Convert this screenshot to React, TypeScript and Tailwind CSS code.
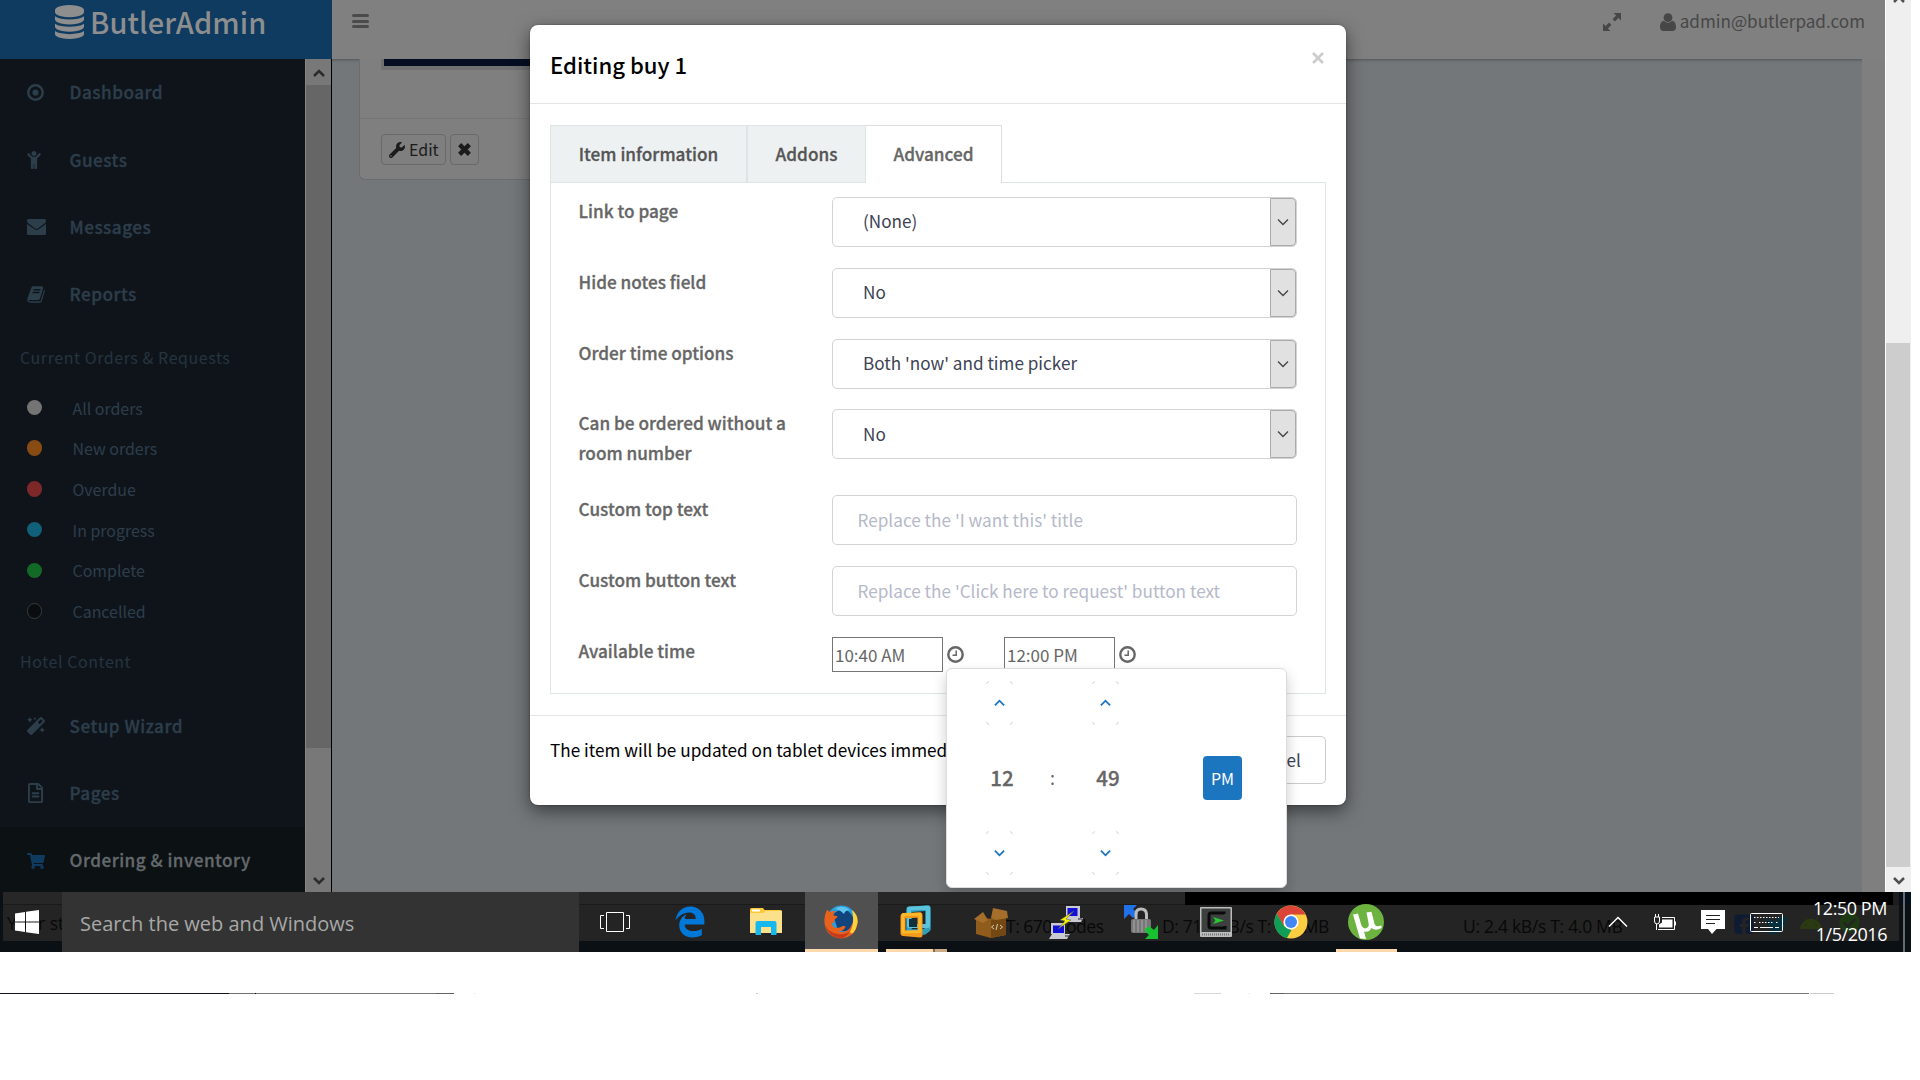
import React from "react";
import {
  FaChild,
  FaMagic,
  FaRegFileAlt,
  FaShoppingCart,
  FaWrench,
  FaEdgeLegacy,
  FaFacebookSquare,
  FaTwitter,
  FaAndroid,
  FaCheckCircle,
} from "react-icons/fa";

/* ---------- small glyphs ---------- */

function DatabaseIcon() {
  return (
    <svg viewBox="0 0 1536 1792" className="h-[34px] w-[29px]" preserveAspectRatio="none" fill="currentColor">
      <path d="M768 768q237 0 443-43t325-127v170q0 69-103 128t-280 93.500-385 34.500-385-34.500-280-93.500-103-128v-170q119 84 325 127t443 43zm0 768q237 0 443-43t325-127v170q0 69-103 128t-280 93.500-385 34.500-385-34.500-280-93.500-103-128v-170q119 84 325 127t443 43zm0-384q237 0 443-43t325-127v170q0 69-103 128t-280 93.500-385 34.500-385-34.500-280-93.500-103-128v-170q119 84 325 127t443 43zm0-1152q208 0 385 34.500t280 93.500 103 128v128q0 69-103 128t-280 93.500-385 34.500-385-34.500-280-93.500-103-128v-128q0-69 103-128t280-93.500 385-34.500z" />
    </svg>
  );
}

function TargetIcon() {
  return (
    <svg viewBox="0 0 17 17" className="size-[17px]">
      <circle cx="8.500" cy="8.500" r="7.200" fill="none" stroke="currentColor" strokeWidth="2.400" />
      <circle cx="8.500" cy="8.500" r="3.100" fill="currentColor" />
    </svg>
  );
}

function EnvelopeIcon() {
  return (
    <svg viewBox="0 0 20 16" className="h-4 w-[19px]" preserveAspectRatio="none" fill="currentColor">
      <path d="M1.500 0h17A1.500 1.500 0 0 1 20 1.500v.4c0 1-.8 2-1.600 2.600L12 9c-.6.400-1.300 1-2 1s-1.400-.6-2-1L1.600 4.500C.8 4 0 2.700 0 1.900v-.4A1.500 1.500 0 0 1 1.500 0z" />
      <path d="M0 4.700c.3.400.7.700 1.100 1l5.700 3.900c1 .7 2 1.500 3.200 1.500s2.200-.8 3.200-1.500l5.700-3.900c.4-.3.800-.6 1.100-1v9.800a1.500 1.500 0 0 1-1.500 1.500h-17A1.500 1.500 0 0 1 0 14.500z" />
    </svg>
  );
}

function BookIcon() {
  return (
    <svg viewBox="0 0 1664 1792" className="h-[19px] w-[18px]" fill="currentColor">
      <path d="M1639 478q40 57 18 129l-275 906q-19 64-76.500 107.500t-122.500 43.500h-923q-77 0-148.500-53.500t-99.500-131.500q-24-67-2-127 0-4 3-27t4-37q1-8-3-21.500t-3-19.500q2-11 8-21t16.500-23.500 16.500-23.500q23-38 45-91.500t30-91.500q3-10 .5-30t-.5-28q3-11 17-28t17-23q21-36 42-92t25-90q1-9-2.500-32t.5-28q4-13 22-30.500t22-22.500q19-26 42.500-84.500t27.500-96.500q1-8-3-25.500t-2-26.500q2-8 9-18t18-23 17-21q8-12 16.500-30.500t15-35 16-36 19.500-32 26.500-23.500 36-11.500 47.500 5.500l-1 3q38-9 51-9h761q74 0 114 56t18 130l-274 906q-36 119-71.500 153.500t-128.500 34.500h-869q-27 0-38 15-11 16-1 43 24 70 144 70h923q29 0 56-15.500t35-41.500l300-987q7-22 5-57 38 15 59 43zm-1064 2q-4 13 2 22.500t20 9.500h608q13 0 25.500-9.500t16.500-22.500l21-64q4-13-2-22.500t-20-9.500h-608q-13 0-25.500 9.500t-16.500 22.500zm-83 256q-4 13 2 22.500t20 9.500h608q13 0 25.500-9.500t16.500-22.500l21-64q4-13-2-22.500t-20-9.500h-608q-13 0-25.500 9.500t-16.500 22.500z" />
    </svg>
  );
}

function ClockIcon() {
  return (
    <svg viewBox="0 0 17 17" className="size-[17px]" fill="none" stroke="#666">
      <circle cx="8.500" cy="8.500" r="7.200" strokeWidth="2.400" />
      <path d="M9.200 4.500V9.200H5.500" strokeWidth="1.500" />
    </svg>
  );
}

function Chevron({ up = false, className = "" }: { up?: boolean; className?: string }) {
  return (
    <svg viewBox="0 0 12 8" className={className} fill="none" stroke="currentColor">
      <path d={up ? "M1 6.500 6 1.500l5 5" : "M1 1.500l5 5 5-5"} />
    </svg>
  );
}

/* ---------- header ---------- */

function Header() {
  return (
    <header className="flex h-[59px] bg-[#808080]">
      <div className="flex w-[332px] gap-[6px] bg-[#0f3b61] pl-[55px] pt-[5px] text-[#8e8e8e]">
        <DatabaseIcon />
        <span className="text-[29px] leading-[33px] font-medium tracking-[0.100px]">ButlerAdmin</span>
      </div>
      <div className="flex flex-1 items-start">
        <div className="ml-5 mt-[14px] flex w-[17px] flex-col gap-[2.500px] text-[#4b4b4b]">
          <i className="h-[3px] rounded-sm bg-current" />
          <i className="h-[3px] rounded-sm bg-current" />
          <i className="h-[3px] rounded-sm bg-current" />
        </div>
        <div className="ml-auto mr-[20px] flex items-center text-[#474747]">
          <svg viewBox="0 0 18 18" className="mt-[1px] size-[18px]" fill="currentColor">
            <path d="M10.500 0H18v7.500l-2.600-2.600-3.500 3.500-2.300-2.300 3.500-3.500zM7.500 18H0v-7.500l2.600 2.600 3.500-3.500 2.300 2.300-3.500 3.500z" />
          </svg>
          <svg viewBox="0 0 16 18" className="ml-[39px] mt-[1px] h-[18px] w-4" fill="currentColor">
            <circle cx="8" cy="4.600" r="4.400" />
            <path d="M4 7.800C1 8.300 0 11 0 14.300 0 16.600 1.400 18 3.300 18h9.400c1.900 0 3.300-1.400 3.300-3.700 0-3.300-1-6-4-6.500A6 6 0 0 1 8 9.800a6 6 0 0 1-4-2z" />
          </svg>
          <span className="ml-1 text-[17.100px] leading-[42px]">admin@butlerpad.com</span>
        </div>
      </div>
    </header>
  );
}

/* ---------- sidebar ---------- */

function NavItem({ icon, label, active = false }: { icon: React.ReactNode; label: string; active?: boolean }) {
  return (
    <div className={`flex h-[67.300px] shrink-0 items-center pl-[26.500px] ${active ? "bg-[#0c1114]" : ""}`}>
      <span className={`flex w-[43px] ${active ? "text-[#0f3b61]" : "text-[#2d3e4b]"}`}>{icon}</span>
      <span
        className={`mt-[-1px] text-[17.140px] font-medium tracking-[0.490px] [-webkit-text-stroke:0.3px] ${active ? "text-[#64696c]" : "text-[#2d3e4b]"}`}
      >
        {label}
      </span>
    </div>
  );
}

function Section({ label }: { label: string }) {
  return (
    <div className="mt-[-1px] flex h-[61px] shrink-0 items-center pb-[2px] pl-5 text-[16px] tracking-[0.560px] text-[#25343f]">
      {label}
    </div>
  );
}

const ORDER_STATES: [string, string][] = [
  ["All orders", "bg-[#747474]"],
  ["New orders", "bg-[#874b13]"],
  ["Overdue", "bg-[#7c2829]"],
  ["In progress", "bg-[#10607a]"],
  ["Complete", "bg-[#136a26]"],
  ["Cancelled", "bg-[#0a0d10] border border-[#3a3a3a]"],
];

function Sidebar() {
  return (
    <aside className="flex h-full w-[332px]">
      <nav className="flex w-[305px] flex-col overflow-hidden bg-[#0f141b]">
        <NavItem icon={<TargetIcon />} label="Dashboard" />
        <NavItem icon={<FaChild className="ml-[-2px] size-[18px]" />} label="Guests" />
        <NavItem icon={<EnvelopeIcon />} label="Messages" />
        <NavItem icon={<BookIcon />} label="Reports" />
        <Section label="Current Orders & Requests" />
        {ORDER_STATES.map(([label, dot]) => (
          <div key={label} className="flex h-[40.700px] shrink-0 items-center pl-[26.500px]">
            <span className={`mt-[-2px] size-[15.500px] rounded-full ${dot}`} />
            <span className="ml-[30.500px] text-[15.950px]">
              <span className="text-[#2d3e4b]">{label}</span>
            </span>
          </div>
        ))}
        <Section label="Hotel Content" />
        <NavItem icon={<FaMagic className="size-[18px]" />} label="Setup Wizard" />
        <NavItem icon={<FaRegFileAlt className="h-5 w-[17px]" />} label="Pages" />
        <NavItem active icon={<FaShoppingCart className="size-[18px]" />} label="Ordering & inventory" />
      </nav>
      <div className="flex w-[26px] flex-col items-center border-l border-[#868686] bg-[#787878] text-[#2c2c2c]">
        <div className="flex h-[26px] items-center pt-[2px]">
          <Chevron up className="h-[9px] w-3 stroke-[2.500]" />
        </div>
        <div className="h-[663px] w-full bg-[#666]" />
        <Chevron className="mb-[7px] mt-auto h-[9px] w-3 stroke-[2.500]" />
      </div>
      <div className="w-px bg-black" />
    </aside>
  );
}

/* ---------- page behind the dialog ---------- */

function Content() {
  return (
    <main className="flex flex-1 bg-[#73777a] shadow-[inset_0_3px_3px_-2px_rgba(0,0,0,0.300)]">
      <div className="ml-[27px] h-[121px] w-[400px] rounded-b-md border border-t-0 border-[#696d70] bg-[#7f7f7f]">
        <div className="h-[60px] border-b border-[#747677] pl-[21px]">
          <div className="h-[11px] border-b-4 border-l-[3px] border-[#707070] bg-[#050d22]" />
        </div>
        <div className="flex gap-1 pl-[21px] pt-[15px] text-[#1b1b1b]">
          <div className="flex h-[31px] w-[65px] items-center gap-1 rounded border border-[#696969] pl-[7px]">
            <FaWrench className="size-4" />
            <span className="mt-[-2px] text-[16px]">Edit</span>
          </div>
          <div className="flex h-[31px] w-[29px] items-center justify-center rounded border border-[#696969]">
            <svg viewBox="0 0 12 12" className="size-[13px]" fill="none" stroke="currentColor" strokeWidth="4">
              <path d="M1.500 1.500l9 9M10.500 1.500l-9 9" />
            </svg>
          </div>
        </div>
      </div>
      <div className="ml-auto w-[23px] bg-[#7f7f7f]" />
    </main>
  );
}

function PageScrollbar() {
  return (
    <div className="flex h-full w-[26px] flex-col items-center border-l border-white bg-[#efefef] text-[#505050]">
      <Chevron up className="mt-[-5px] h-[9px] w-3 stroke-[2.500]" />
      <div className="mt-[339px] h-[524px] w-full border-r border-[#efefef] bg-[#cdcdcd]" />
      <Chevron className="mb-[7px] mt-auto h-[9px] w-3 stroke-[2.500]" />
    </div>
  );
}

/* ---------- dialog ---------- */

function Label({ children }: { children: React.ReactNode }) {
  return (
    <label className="mt-[-1px] w-[253.500px] pr-8 text-[17.180px] leading-[30px] font-medium text-[#666] [-webkit-text-stroke:0.3px]">
      {children}
    </label>
  );
}

function SelectRow({ label, value, tall = false }: { label: string; value: string; tall?: boolean }) {
  return (
    <div className={`flex ${tall ? "h-[85.500px]" : "h-[70.800px]"}`}>
      <Label>{label}</Label>
      <div className="flex h-[50px] w-[465px] items-center rounded-[5px] border border-[#d3d3d3] pl-[30px]">
        <span className="mt-[-1.500px] text-[17.140px] text-[#3c4353]">{value}</span>
        <div className="ml-auto flex h-full w-[26px] items-center justify-center rounded-r-[4px] border border-[#ababab] bg-[#e1e1e1] pr-px text-[#444]">
          <Chevron className="h-[8px] w-3 stroke-[1.300]" />
        </div>
      </div>
    </div>
  );
}

function InputRow({ label, placeholder }: { label: string; placeholder: string }) {
  return (
    <div className="flex h-[71px]">
      <Label>{label}</Label>
      <div className="flex h-[50px] w-[465px] items-center rounded-[5px] border border-[#d3d3d3] pl-[24.500px]">
        <span className="mt-[-1px] text-[17.180px] text-[#b5b9c9]">{placeholder}</span>
      </div>
    </div>
  );
}

function TimeField({ value }: { value: string }) {
  return (
    <div className="flex h-[35px] w-[172px] items-center">
      <div className="flex h-[35px] w-[111px] items-center border border-[#757575] pl-[2px]">
        <span className="text-[17px] text-[#666]">{value}</span>
      </div>
      <span className="ml-[3.500px]">
        <ClockIcon />
      </span>
    </div>
  );
}

function GhostButton({ up = false }: { up?: boolean }) {
  return (
    <button className="relative flex h-11 w-[27px] items-center justify-center text-[#1b74c0]">
      <svg viewBox="0 0 27 44" className="absolute inset-0 h-11 w-[27px]" fill="none" stroke="#cfcfcf">
        <path d="M.5 3Q1 1 3 .5M24 .5q2 .5 2.500 2.500M.5 41q.5 2 2.500 2.500M24 43.500q2-.5 2.500-2.500" />
      </svg>
      <Chevron up={up} className="h-[8px] w-[11px] stroke-2" />
    </button>
  );
}

function Spinner({ value }: { value: string }) {
  return (
    <div className="flex w-[27px] flex-col items-center">
      <GhostButton up />
      <span className="flex h-[106px] items-center pb-px pl-[5px] text-[20.500px] font-medium text-[#666] [-webkit-text-stroke:0.3px]">
        {value}
      </span>
      <GhostButton />
    </div>
  );
}

function TimePicker() {
  return (
    <div className="absolute left-[416px] top-[643px] flex h-[220px] w-[341px] rounded-md border border-[#dcdcdc] bg-white pl-[39px] pt-[12px] shadow-[0_6px_14px_rgba(0,0,0,0.200)]">
      <Spinner value="12" />
      <span className="mt-[83px] w-[79px] pl-[37px] text-[18px] text-[#666]">:</span>
      <Spinner value="49" />
      <div className="ml-[84px] mt-[75px] flex h-11 w-[39px] items-center justify-center rounded-[4px] bg-[#1c75bf] text-[16px] text-white">
        PM
      </div>
    </div>
  );
}

function Dialog() {
  return (
    <div className="absolute left-[530px] top-[25px] h-[780px] w-[816px] rounded-lg bg-white shadow-[0_6px_18px_rgba(0,0,0,0.500),0_0_2px_rgba(0,0,0,0.400)]">
      <div className="flex h-[79px] items-start justify-between border-b border-[#e5e5e5] pl-[20px] pr-[22px]">
        <h4 className="mt-[20px] text-[22.100px] leading-[38px] font-medium text-black">Editing buy 1</h4>
        <svg viewBox="0 0 12 12" className="mt-[27px] size-3" fill="none" stroke="#ccc" strokeWidth="2.600">
          <path d="M1 1l10 10M11 1L1 11" />
        </svg>
      </div>
      <div className="px-5 pt-[21px]">
        <div className="flex h-[58px] text-[17.180px] font-medium text-[#555] [-webkit-text-stroke:0.3px]">
          <div className="flex w-[198px] items-center justify-center border border-r-2 border-[#dee5e7] bg-[#edf1f2] pb-[1px]">
            Item information
          </div>
          <div className="flex w-[118px] items-center justify-center border border-l-0 border-[#dee5e7] bg-[#edf1f2] pb-[1px]">
            Addons
          </div>
          <div className="flex w-[136px] items-center justify-center border border-b-0 border-l-0 border-[#dddddd] pb-[2px] text-[#666]">
            Advanced
          </div>
          <div className="flex-1 border-b border-[#dee5e7]" />
        </div>
        <div className="h-[511px] border border-t-0 border-[#dee5e7] pl-[27.500px] pt-[14px]">
          <SelectRow label="Link to page" value="(None)" />
          <SelectRow label="Hide notes field" value="No" />
          <SelectRow label="Order time options" value="Both 'now' and time picker" />
          <SelectRow label="Can be ordered without a room number" value="No" tall />
          <InputRow label="Custom top text" placeholder="Replace the 'I want this' title" />
          <InputRow label="Custom button text" placeholder="Replace the 'Click here to request' button text" />
          <div className="flex">
            <Label>Available time</Label>
            <TimeField value="10:40 AM" />
            <TimeField value="12:00 PM" />
          </div>
        </div>
      </div>
      <div className="mt-[21px] flex justify-between border-t border-[#e5e5e5] pl-[20px] pr-5 pt-5">
        <p className="mt-px text-[17.160px] leading-[26px] whitespace-nowrap text-black">
          The item will be updated on tablet devices immed
        </p>
        <div className="flex h-[48px] w-[104px] items-center justify-center rounded-[5px] border border-[#ccc] text-[17.140px] text-[#3c4353]">
          Cancel
        </div>
      </div>
      <TimePicker />
    </div>
  );
}

/* ---------- taskbar ---------- */

function TaskViewIcon() {
  return (
    <svg viewBox="0 0 30 20" className="h-5 w-[30px]" fill="none" stroke="#fff">
      <path d="M6.500.5h17v19h-17zM4 3.500H.5v13H4M26 3.500h3.500v13H26" />
    </svg>
  );
}

function FolderIcon() {
  return (
    <svg viewBox="0 0 32 28" className="h-7 w-8">
      <path d="M0 1.500Q0 0 1.500 0H13l1.500 2H30.500Q32 2 32 3.500V25H0z" fill="#ffc93c" />
      <rect x="2" y="1.500" width="8" height="2" fill="#fff" />
      <path d="M0 5h14l1.500-2H32v22H0z" fill="#fce18d" />
      <path d="M5.500 27V15Q5.500 13 7.500 13H24.500q2 0 2 2V27h-5.500v-8H11v8z" fill="#17b8ee" />
    </svg>
  );
}

function FirefoxIcon() {
  return (
    <svg viewBox="0 0 34 34" className="size-[34px]">
      <circle cx="17.500" cy="15.500" r="15" fill="#2a9fdc" />
      <path d="M9 10Q14 3 24 6q8 6 5 15-6 8-15 4z" fill="#12457e" />
      <path d="M11 3.500q8-4 15 1.500-5 0-6 4-4-4-9-5.500z" fill="#5cc4ee" />
      <path d="M28 5q6 6 5.500 13Q32 32 17 33.500 2 32 .5 18 0 9 3.500 4.500q1 2 2.500 2.500 2.500-1.500 6-1-3 2-2.500 4.500l3.500.5q1 .8-.5 2l-2.500 2 .5 2.500q-2 0-3 .5 1 5 6 5 3-.5 5-2 3-.5 3 1-2 4-7 5 9 1 12-5Q32 14 28 5z" fill="#e8621c" />
      <path d="M28 5q6.500 5 5.500 13-1 6-4.500 10-2 1-3-1 5-9 2-22z" fill="#ffd23c" />
      <path d="M1 20q4 8 13 9 7 1 12-3-4 7-9 7.500Q4 32 1 20z" fill="#c93a1b" />
    </svg>
  );
}

function VmwareIcon() {
  return (
    <svg viewBox="0 0 32 34" className="h-[34px] w-8" fill="none" strokeLinejoin="round">
      <path d="M9 4.500 28 3v21l-4 3H9z" stroke="#2f9fbd" strokeWidth="5.500" />
      <path d="M9 3.500 28 2.800V21H9z" stroke="#5cc3dc" strokeWidth="4" />
      <path d="M3 11l17-1v20L3 28.500z" stroke="#f79a1c" strokeWidth="5" />
      <path d="M3 9.500l17-.5v17.500L3 27z" stroke="#fdb92a" strokeWidth="3" />
      <path d="M9 14h8v8H9z" fill="#12303c" />
    </svg>
  );
}

function BoxIcon() {
  return (
    <svg viewBox="0 0 35 31" className="h-[31px] w-[35px]">
      <path d="M2 12l30-1v17l-15 3-15-4z" fill="#8f5c1c" />
      <path d="M17 13l15-2v17l-15 3z" fill="#744812" />
      <path d="M0 12L9 5l5 8-5 3zM17 11L19 1l14 3 1 7-12 2z" fill="#a56e2b" />
      <path d="M20 18l-2.500 2 2.500 2M23.500 17l-1.500 6M26 18l2.500 2-2.500 2" fill="none" stroke="#d9c9ae" />
    </svg>
  );
}

function PuttyIcon() {
  return (
    <svg viewBox="0 0 34 35" className="h-[35px] w-[34px]">
      <path d="M17 1h14v12h3l-2 4H15l2-4z" fill="#c9c9d2" />
      <path d="M18.500 3h10v8h-10z" fill="#1010d8" />
      <path d="M2 18h14v11h5l-3 5H0l3-5H2z" fill="#c9c9d2" />
      <path d="M4 20.500h11V28H4z" fill="#1010d8" />
      <path d="M16 31h5M29 14h4" stroke="#222" />
      <path d="M25 6L11 15l5 1-7 8 13-9-5-1z" fill="#f5f000" stroke="#555" strokeWidth=".5" />
    </svg>
  );
}

function LockIcon() {
  return (
    <svg viewBox="0 0 35 34" className="h-[34px] w-[35px]">
      <path d="M0 0h13l-4 4 5 5-5 4-4-4-5 5z" fill="#2172e8" />
      <path d="M12 15V9q0-5 5-5t5.500 5v6" fill="none" stroke="#bcbcbc" strokeWidth="3" />
      <rect x="7" y="14" width="20" height="14" rx="2" fill="#777" />
      <path d="M10 15v12M14 15v12M18 15v12M22 15v12" stroke="#999" strokeWidth="1.500" />
      <path d="M34 20v14H21l4-4-5-5 5-4 5 4z" fill="#18c132" />
    </svg>
  );
}

function TerminalIcon() {
  return (
    <svg viewBox="0 0 32 30" className="h-[30px] w-8">
      <rect width="32" height="30" rx="1" fill="#bdbdbd" />
      <rect x="1.500" y="1.500" width="29" height="23.500" fill="#3c403e" />
      <path d="M24 7V6H11q-2 0-2 2v11q0 2 2 2h14v-2" fill="none" stroke="#0a0a0a" strokeWidth="3" />
      <path d="M13 10l11 3.500-11 3.500 2.500-3.500z" fill="#27c832" />
      <path d="M2 27.500h28" stroke="#777" strokeWidth="2" strokeDasharray="1 1" />
    </svg>
  );
}

function ChromeIcon() {
  return (
    <svg viewBox="0 0 34 34" className="size-[34px]">
      <circle cx="17" cy="17" r="16.500" fill="#ffcd41" />
      <path d="M2.700 8.800A16.500 16.500 0 0 1 31.500 9.500H17L9.500 21z" fill="#db4437" />
      <path d="M2.700 8.800 10 21l7.500 4-4.700 8.300A16.500 16.500 0 0 1 2.700 8.800z" fill="#0f9d58" />
      <circle cx="17" cy="17" r="7.600" fill="#fff" />
      <circle cx="17" cy="17" r="6" fill="#4285f4" />
    </svg>
  );
}

function TorrentIcon() {
  return (
    <svg viewBox="0 0 36 36" className="size-9">
      <circle cx="18" cy="18" r="18" fill="#6db33f" />
      <path d="M5 10.500l5-1 3 10.500q1.500 5 5 4.300 3.500-.8 2.500-5.500L18.500 8.500l5-.8 3 12q1 3.500 4.500 2.300l2.500-.5v2.500q-6 3.500-10 0-2 4.500-7.500 3.500l2 7.500-6-.5z" fill="#fff" />
    </svg>
  );
}

function TaskButton({ children, width = "w-[75px]" }: { children: React.ReactNode; width?: string }) {
  return <div className={`flex h-full shrink-0 items-center justify-center pr-[2px] ${width}`}>{children}</div>;
}

function Ghost({ children, className }: { children: React.ReactNode; className: string }) {
  return (
    <span className={`absolute whitespace-nowrap font-['Open_Sans',sans-serif] text-[17.500px] leading-[24px] text-[#080808] ${className}`}>
      {children}
    </span>
  );
}

function TaskbarBackdrop() {
  return (
    <div className="absolute inset-0 flex flex-col bg-[#0a1014]">
      <div className="flex h-[13px]">
        <div className="w-[3px]" />
        <div className="w-[1182px] border-b border-[#1a1a1a] bg-[#272727]" />
        <div className="flex-1 bg-black" />
        <div className="w-[6px] bg-[#1d1d1d]" />
        <div className="w-[12px] bg-[#04101a]" />
      </div>
      <div className="ml-[3px] mr-[12px] h-[36px] bg-[#242424]" />
      <Ghost className="left-[7px] top-[19px]">Your st</Ghost>
      <Ghost className="left-[1006px] top-[22px] tracking-[-0.500px]">T: 670 nodes</Ghost>
      <Ghost className="left-[1162px] top-[22px] tracking-[-0.400px]">D: 71.2 kB/s T: 4.3 MB</Ghost>
      <Ghost className="left-[1463px] top-[22px] tracking-[-0.300px]">U: 2.4 kB/s T: 4.0 MB</Ghost>
      <FaFacebookSquare className="absolute left-[1733px] top-[21px] size-[22px] text-[#0f1a33]" />
      <FaTwitter className="absolute left-[1766px] top-[22px] size-[22px] text-[#06303f]" />
      <FaAndroid className="absolute left-[1800px] top-[21px] size-[22px] text-[#2b3a10]" />
      <FaCheckCircle className="absolute left-[1839px] top-[20px] size-[21px] text-[#1d3a12]" />
    </div>
  );
}

function Taskbar() {
  return (
    <footer className="relative h-[60px] w-[1911px]">
      <TaskbarBackdrop />
      <div className="relative flex h-full items-center">
        <div className="flex h-full w-[62px] items-center pl-[15px]">
          <svg viewBox="0 0 24 24" className="size-6" fill="#fff">
            <path d="M0 3.400 10 2v9.500H0zM11 1.800 24 0v11.500H11zM0 12.500h10V22L0 20.600zM11 12.500h13V24l-13-1.800z" />
          </svg>
        </div>
        <div className="h-full w-[517px] bg-[#333] pl-[18px] pt-[1px] font-['Open_Sans',sans-serif] text-[20px] leading-[62px] text-[#a8a8a8]">
          Search the web and Windows
        </div>
        <TaskButton width="w-[74px]"><TaskViewIcon /></TaskButton>
        <TaskButton width="w-[76px]"><FaEdgeLegacy className="size-[32px] text-[#0078d7]" /></TaskButton>
        <TaskButton width="w-[76px]"><FolderIcon /></TaskButton>
        <div className="flex h-full w-[73px] items-center justify-center bg-[#505050] pr-[2px] shadow-[inset_0_-3px_0_#ffd9ae]">
          <FirefoxIcon />
        </div>
        <div className="relative flex h-full w-[78px] items-center justify-center pr-[2px]">
          <VmwareIcon />
          <div className="absolute bottom-0 left-2 flex h-[3px] w-[61px]">
            <div className="w-[47px] bg-[#ffd9ae]" />
            <div className="w-[2px] bg-[#7d6d5a]" />
            <div className="flex-1 bg-[#c9ab88]" />
          </div>
        </div>
        <TaskButton width="w-[72px]"><BoxIcon /></TaskButton>
        <TaskButton width="w-[77px]"><PuttyIcon /></TaskButton>
        <TaskButton width="w-[74px]"><LockIcon /></TaskButton>
        <TaskButton width="w-[75px]"><TerminalIcon /></TaskButton>
        <TaskButton width="w-[75px]"><ChromeIcon /></TaskButton>
        <div className="relative flex h-full w-[76px] items-center justify-center pr-[2px]">
          <TorrentIcon />
          <div className="absolute bottom-0 left-[7px] h-[3px] w-[61px] bg-[#ffd9ae]" />
        </div>
        <svg viewBox="0 0 20 12" className="ml-auto h-3 w-5" fill="none" stroke="#fff" strokeWidth="1.500">
          <path d="M1 10.500l9-9 9 9" />
        </svg>
        <svg viewBox="0 0 24 17" className="ml-[25px] mt-px h-[17px] w-6" fill="none" stroke="#fff">
          <path d="M9 3.500h12.500v12H5M22.500 7.500v4M1.500 3v4q0 3 2.500 3t2.500-3V3zM2.500 0v3M5.500 0v3M3.500 10v6" />
          <path d="M9 5.500h10.500v8H6v-3l3-2z" fill="#fff" stroke="none" />
        </svg>
        <svg viewBox="0 0 24 24" className="ml-6 size-6" fill="#fff">
          <path d="M0 0h24v19h-8.500L11 24l-4-5H0z" />
          <path d="M5 5.500h14M5 9.500h14M5 13.500h9" stroke="#222" />
        </svg>
        <svg viewBox="0 0 33 19" className="ml-[25px] h-[19px] w-[33px]" fill="none" stroke="#fff">
          <rect x=".5" y=".5" width="32" height="18" rx="1" />
          <path d="M4 4.500h25" strokeDasharray="1.500 1.500" />
          <path d="M4 9.500h3M9 9.500h15M26 9.500h3" strokeDasharray="1.500 1.500" />
          <path d="M4 14.500h4M10 14.500h13M25 14.500h4" />
        </svg>
        <div className="mb-[2px] ml-[29px] w-[75px] whitespace-nowrap text-right font-['Open_Sans',sans-serif] text-[18px] leading-[26px] tracking-[-0.450px] text-white">
          12:50 PM
          <br />
          1/5/2016
        </div>
        <div className="ml-[16px] mr-[6px] h-full w-[2px] bg-[#6a6a6a]" />
      </div>
    </footer>
  );
}

/* Thin strip left under the taskbar. */
function BottomStrip() {
  return (
    <div className="mt-[41px] flex h-px">
      <div className="w-[229px] bg-[#10141a]" />
      <div className="w-[26px] bg-[#707070]" />
      <div className="w-px bg-black" />
      <div className="w-[180px] bg-[#73777a]" />
      <div className="w-[18px] bg-[#606264]" />
      <div className="ml-[20px] w-px bg-[#dde3e5]" />
      <div className="ml-[281px] w-[2px] bg-[#ccc]" />
      <div className="ml-[436px] w-[27px] bg-[#d8d8d8]" />
      <div className="ml-[28px] w-px bg-[#ddd]" />
      <div className="ml-[20px] w-[14px] bg-[#606264]" />
      <div className="w-[525px] bg-[#73777a]" />
      <div className="ml-px w-[24px] bg-[#cdcdcd]" />
    </div>
  );
}

export default function App() {
  return (
    <div className="relative h-[1080px] w-[1920px] overflow-hidden bg-white font-['Noto_Sans_CJK_SC',sans-serif]">
      <div className="flex h-[892px] w-[1911px]">
        <div className="flex w-[1885px] flex-col">
          <Header />
          <div className="flex h-[833px]">
            <Sidebar />
            <Content />
          </div>
        </div>
        <PageScrollbar />
      </div>
      <Dialog />
      <Taskbar />
      <BottomStrip />
    </div>
  );
}
